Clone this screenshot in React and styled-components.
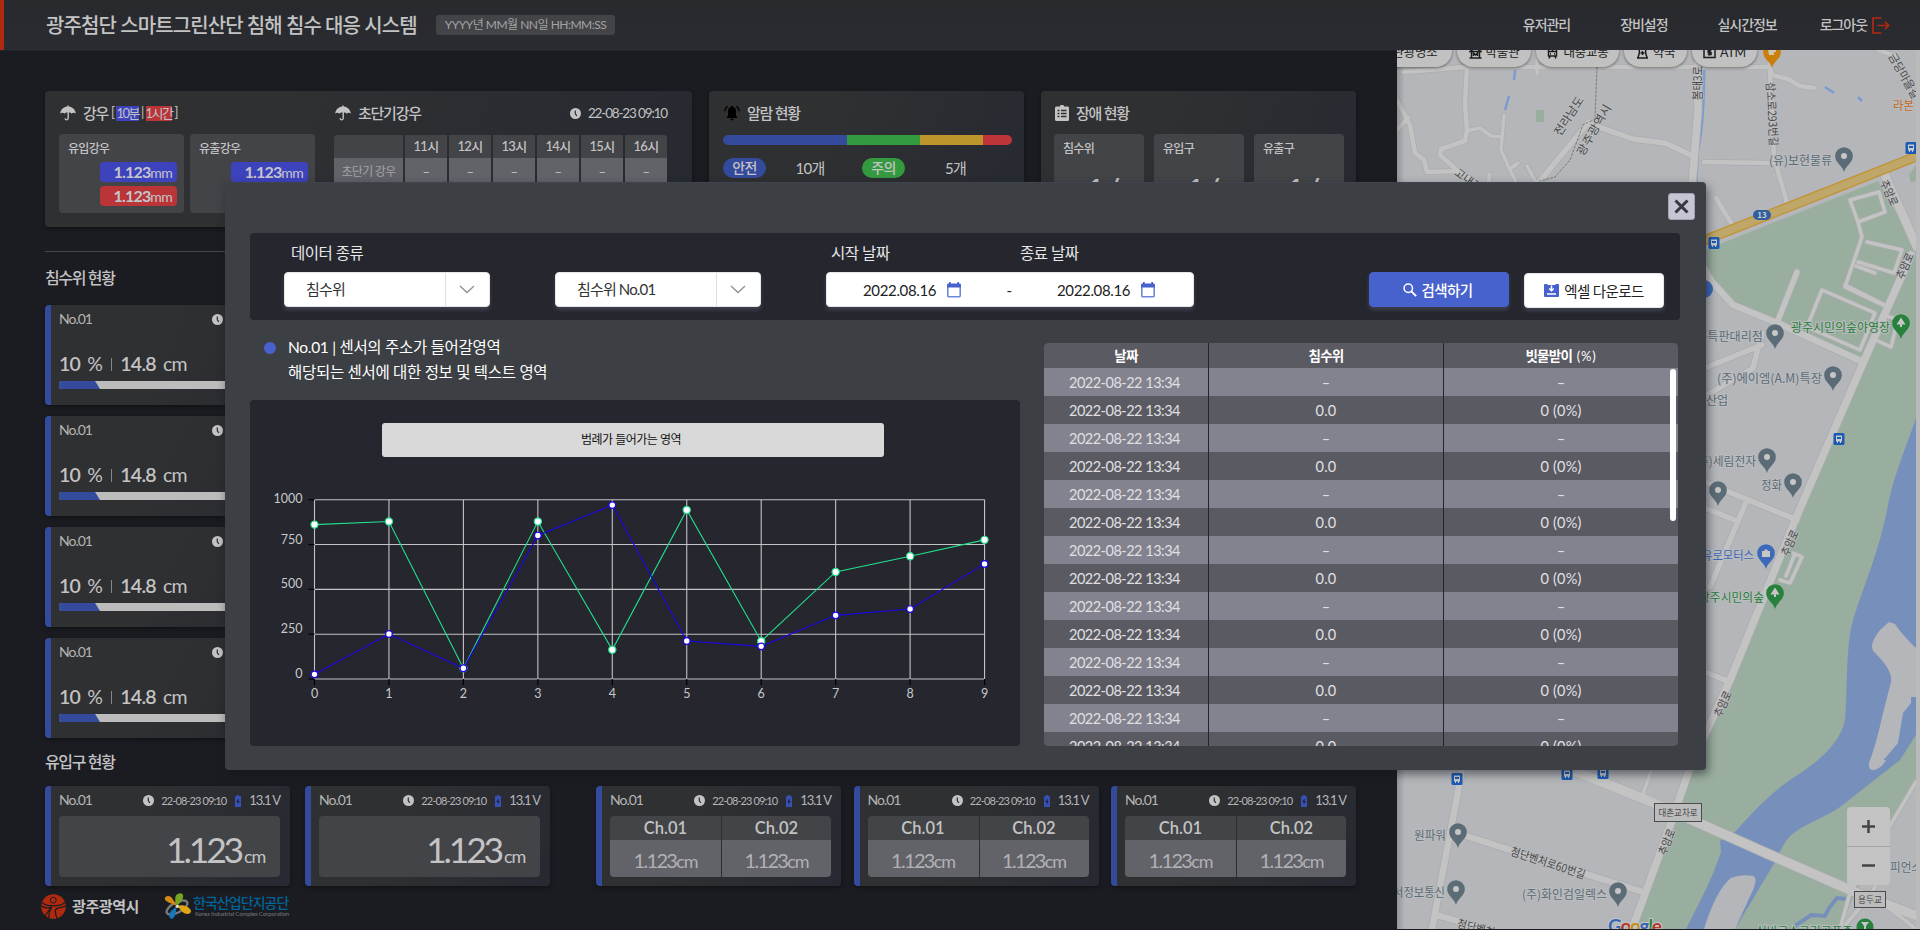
import React from "react";
import styled, { createGlobalStyle, css } from "styled-components";

const GlobalStyle = createGlobalStyle`
  *, *::before, *::after { box-sizing: border-box; }
  html, body { margin: 0; background: #1b1c21; }
  body {
    width: 1920px;
    height: 930px;
    overflow: hidden;
    font-family: Lato, "Noto Sans CJK KR", sans-serif;
    font-size: 14px;
    line-height: 1.2;
    letter-spacing: -0.05em;
    color: #c3c3c4;
    white-space: nowrap;
  }
  svg { display: block; flex: none; }
`;

const Page = styled.div`
  position: relative;
  width: 1920px;
  height: 930px;
  display: flex;
  flex-direction: column;
  background: #1b1c21;
  overflow: hidden;
`;

/* ---------- header ---------- */

const Header = styled.header`
  display: flex;
  align-items: center;
  height: 50px;
  flex: none;
  padding: 0 30px 0 42px;
  border-left: 4px solid #b02a10;
  background: linear-gradient(#27292d, #2b2c31);
  box-shadow: 0 1px 0 #20242d;
`;

const Title = styled.h1`
  width: 390px;
  margin: 0;
  font-size: 20px;
  font-weight: 500;
  letter-spacing: -0.9px;
  color: #c3c3c4;
`;

const TimeChip = styled.div`
  width: 179px;
  height: 20px;
  border-radius: 3px;
  background: #434448;
  color: #a3a3a5;
  font-size: 12px;
  line-height: 20px;
  text-align: center;
  letter-spacing: -0.5px;
`;

const Nav = styled.nav`
  display: flex;
  gap: 50px;
  margin-left: auto;
`;

const NavItem = styled.a`
  display: flex;
  align-items: center;
  gap: 5px;
  font-size: 14px;
  font-weight: 500;
  letter-spacing: -1.05px;
  &:last-child { margin-left: -7px; }
`;

/* ---------- dashboard ---------- */

const Body = styled.div`
  display: flex;
  flex: 1;
  min-height: 0;
`;

const Dashboard = styled.main`
  display: flex;
  flex-direction: column;
  width: 1397px;
  padding: 41px 41px 0 45px;
`;

const panel = css`
  border-radius: 4px;
  background: linear-gradient(115deg, #2f3032 35%, #262931);
  box-shadow: 0 2px 4px rgba(0, 0, 0, 0.35);
`;

const TopRow = styled.section`
  display: grid;
  grid-template-columns: 647px 315px 315px;
  gap: 17px;
  height: 136px;
  border-radius: 4px;
`;

const Card = styled.article`
  ${panel}
  display: flex;
  gap: 19px;
  padding: 12px 14px 0 ${(p) => p.$left || 14}px;
  overflow: hidden;
`;

const Column = styled.div`
  width: ${(p) => p.$w};
  display: flex;
  flex-direction: column;
`;

const CardHead = styled.div`
  display: flex;
  align-items: center;
  gap: 7px;
  height: 20px;
  margin-bottom: 11px;
  font-size: 16px;
  font-weight: 500;
  > svg { margin-left: 1px; }
`;

const HeadText = styled.span`
  font-size: 15px;
  letter-spacing: -1.25px;
`;

const Period = styled.span`
  display: flex;
  align-items: center;
  gap: 2px;
  font-size: 13px;
  font-weight: 400;
  margin-left: -4px;
`;

const Mark = styled.mark`
  display: block;
  height: 15px;
  line-height: 15px;
  letter-spacing: -1.5px;
  color: #c0c0c8;
  background: ${(p) => p.$c};
`;

const Stamp = styled.span`
  display: flex;
  align-items: center;
  gap: 7px;
  margin-left: auto;
  font-size: ${(p) => p.$size || 13.5}px;
  font-weight: 400;
  letter-spacing: ${(p) => p.$ls || "-1.15px"};
`;

const Tiles = styled.div`
  display: flex;
  gap: ${(p) => p.$gap}px;
`;

const Tile = styled.div`
  display: flex;
  flex-direction: column;
  align-items: flex-end;
  gap: 4px;
  width: ${(p) => p.$w}px;
  height: 79px;
  padding: 7px 7px 0 9px;
  border-radius: 4px;
  background: #434448;
`;

const TileLabel = styled.div`
  align-self: flex-start;
  height: 17px;
  font-size: 12px;
  line-height: 15px;
  font-weight: 500;
`;

const TileRatio = styled.div`
  align-self: center;
  margin-top: 10px;
  padding-left: 7px;
  font-size: 27px;
  line-height: 32px;
  font-weight: 700;
  word-spacing: -1px;
`;

const Reading = styled.div`
  width: 77px;
  height: 20px;
  padding-right: 5px;
  border-radius: 4px;
  background: ${(p) => p.$c};
  font-size: 16px;
  line-height: 20px;
  text-align: right;
  color: #c5c5cd;
  b { letter-spacing: -0.8px; }
  small { font-size: 14px; }
`;

const Forecast = styled.div`
  display: grid;
  grid-template-columns: 69px repeat(6, 1fr);
  gap: 0 2px;
  margin-top: 1px;
  border-radius: 3px 3px 0 0;
  overflow: hidden;
`;

const ForecastCell = styled.div`
  height: ${(p) => (p.$head ? 23 : 28)}px;
  line-height: ${(p) => (p.$head ? 23 : 28)}px;
  background: ${(p) => (p.$head ? "#434448" : "#626269")};
  color: ${(p) => (p.$dim ? "#a3a3a7" : "#c3c3c4")};
  font-size: ${(p) => (p.$dim ? 12 : 13)}px;
  font-weight: ${(p) => (p.$head ? 500 : 400)};
  text-align: center;
`;

const AlarmBar = styled.div`
  display: flex;
  height: 10px;
  margin: 1px 0 13px;
  border-radius: 5px;
  overflow: hidden;
`;

const Segment = styled.i`
  width: ${(p) => p.$w}px;
  background: ${(p) => p.$c};
`;

const AlarmCounts = styled.div`
  display: grid;
  grid-template-columns: 43px 88px 51px 101px;
  align-items: center;
  text-align: center;
  font-size: 15px;
  font-weight: 400;
`;

const Pill = styled.span`
  width: 43px;
  height: 20px;
  justify-self: end;
  border-radius: 10px;
  line-height: 20px;
  font-size: 14px;
  font-weight: 500;
  background: ${(p) => p.$c};
`;

const Rule = styled.hr`
  width: 100%;
  height: 1px;
  margin: 24px 0 16px;
  border: 0;
  background: #47484b;
`;

const SectionTitle = styled.h2`
  height: 20px;
  margin: 0 0 ${(p) => p.$gap}px;
  font-size: 16px;
  line-height: 20px;
  font-weight: 500;
  letter-spacing: -1.35px;
`;

const LevelList = styled.section`
  display: flex;
  flex-direction: column;
  gap: 11px;
  margin-bottom: 14px;
`;

const Sensor = styled.article`
  ${panel}
  width: ${(p) => p.$w || 245}px;
  height: 100px;
  padding: 6px 10px 0 8px;
  border-left: 6px solid #344a9c;
`;

const SensorHead = styled.div`
  display: flex;
  align-items: center;
  height: 17px;
  margin-bottom: 7px;
  font-size: 14px;
  font-weight: 400;
  letter-spacing: -1px;
  color: #b5b5b7;
`;

const Volt = styled.span`
  display: flex;
  align-items: center;
  gap: 8px;
  margin-left: 9px;
  font-size: 13px;
  letter-spacing: -1.1px;
`;

const LevelText = styled.div`
  display: flex;
  align-items: center;
  gap: 7px;
  height: 24px;
  margin-top: 24px;
  font-size: 19.5px;
  font-weight: 600;
  letter-spacing: -0.7px;
  span { font-weight: 400; }
  i { width: 1px; height: 13px; margin: 0 1px 0 2px; background: #85868a; }
`;

const Gauge = styled.div`
  display: flex;
  height: 8px;
  margin-top: 5px;
  border-radius: 3px;
  background: #bcbcbc;
  overflow: hidden;
`;

const GaugeFill = styled.div`
  width: 41px;
  background: #344a9c;
  clip-path: polygon(0 0, 88% 0, 100% 100%, 0 100%);
`;

const BottomRow = styled.section`
  display: flex;
  gap: ${(p) => p.$gap || 15}px;
`;

const Groups = styled.div`
  display: flex;
  justify-content: space-between;
`;

const BigValue = styled.div`
  display: flex;
  align-items: baseline;
  justify-content: flex-end;
  height: 61px;
  padding: 12px 15px 0 0;
  border-radius: 4px;
  background: #434448;
  font-size: 35.5px;
  line-height: 44px;
  letter-spacing: -3.2px;
  small { font-size: 18px; letter-spacing: -1.2px; margin-left: 3px; }
`;

const Channels = styled.div`
  display: grid;
  grid-template-columns: 111px 109px;
  column-gap: 1px;
  border-radius: 4px;
  overflow: hidden;
`;

const ChannelName = styled.div`
  height: 24px;
  background: #434448;
  font-size: 16.5px;
  line-height: 25px;
  font-weight: 600;
  text-align: center;
  letter-spacing: 0;
`;

const ChannelValue = styled.div`
  height: 37px;
  background: #626269;
  color: #b1b1b4;
  font-size: 20px;
  line-height: 41px;
  text-align: center;
  letter-spacing: -1.7px;
  small { font-size: 18px; letter-spacing: -1.1px; }
`;

const Logos = styled.footer`
  display: flex;
  align-items: center;
  height: 26px;
  margin: 7px 0 0 -4px;
`;

const CityName = styled.span`
  width: 92px;
  margin-left: 6px;
  font-size: 15px;
  font-weight: 700;
  letter-spacing: -0.4px;
`;

const Corp = styled.div`
  display: flex;
  flex-direction: column;
  margin-left: 2px;
  font-size: 14px;
  line-height: 15px;
  font-weight: 500;
  color: #00649a;
  letter-spacing: -0.95px;
  small {
    font-size: 6px;
    line-height: 8px;
    font-weight: 400;
    letter-spacing: -0.15px;
    color: #77787a;
    margin-left: 2px;
  }
`;

/* ---------- map ---------- */

const MapPane = styled.aside`
  position: relative;
  width: 523px;
  height: 879px;
  background: #bababa;
  overflow: hidden;
`;

const ChipStrip = styled.div`
  position: absolute;
  top: -15px;
  left: -19px;
  display: flex;
  gap: 5px;
`;

const MapChip = styled.div`
  display: flex;
  align-items: center;
  justify-content: center;
  gap: 4px;
  width: ${(p) => p.$w}px;
  height: 32px;
  padding-top: 3px;
  border-radius: 16px;
  background: #c1c1c1;
  box-shadow: 0 1px 3px rgba(0, 0, 0, 0.45);
  font-size: 12.5px;
  letter-spacing: -0.2px;
  color: #222;
`;

const ZoomControl = styled.div`
  position: absolute;
  top: 757px;
  left: 450px;
  width: 43px;
  height: 78px;
  display: grid;
  grid-template-rows: 39px 39px;
  place-items: center;
  border-radius: 4px;
  background: linear-gradient(#c3c3c3 39px, #a4a4a4 39px, #a4a4a4 40px, #c3c3c3 40px);
`;

/* ---------- modal ---------- */

const Modal = styled.div`
  position: absolute;
  top: 182px;
  left: 225px;
  width: 1481px;
  height: 588px;
  display: flex;
  flex-direction: column;
  padding: 10px 26px 24px 25px;
  border-radius: 4px;
  background: #3c3f43;
  border-top: 1px solid #3f444f;
  box-shadow: 2px 4px 10px rgba(20, 22, 30, 0.55);
  color: #fff;
`;

const CloseButton = styled.button`
  display: grid;
  place-items: center;
  width: 27px;
  height: 27px;
  margin: 0 -15px 13px auto;
  flex: none;
  padding: 0;
  border: 1px solid #a4a3b3;
  border-radius: 3px;
  background: #c6c5d3;
`;

const FilterPanel = styled.div`
  display: flex;
  align-items: flex-end;
  height: 87px;
  flex: none;
  padding: 0 16px 13px 34px;
  border-radius: 4px;
  background: #25262e;
`;

const Field = styled.div`
  width: ${(p) => p.$w}px;
  margin-right: ${(p) => p.$mr}px;
`;

const Labels = styled.div`
  display: flex;
  height: 29px;
  padding-left: ${(p) => p.$pl}px;
  font-size: 15.5px;
  line-height: 20px;
  letter-spacing: -0.5px;
  color: #e8e8ea;
  span { width: 189px; flex: none; }
`;

const white = css`
  display: flex;
  align-items: center;
  height: 35px;
  border: 1px solid #e3e6ea;
  border-radius: 4px;
  background: #fff;
  color: #333;
  box-shadow: 0 3px 4px rgba(120, 125, 150, 0.3);
`;

const SelectBox = styled.div`
  ${white}
  padding-left: 21px;
  font-size: 15px;
  letter-spacing: -0.85px;
  svg { margin: 0 auto 0 13px; }
`;

const SelectText = styled.span`
  width: 140px;
  height: 33px;
  line-height: 33px;
  border-right: 1px solid #dcdfe3;
`;

const DateBox = styled.div`
  ${white}
  padding-left: 36px;
  font-size: 15px;
  letter-spacing: -0.35px;
  color: #222;
`;

const DateText = styled.span`
  width: 84px;
`;

const Dash = styled.span`
  width: 96px;
  text-align: center;
`;

const Button = styled.button`
  display: flex;
  align-items: center;
  justify-content: center;
  gap: 5px;
  width: 140px;
  height: 35px;
  margin: 0 0 ${(p) => (p.$primary ? 0 : -1)}px ${(p) => (p.$primary ? "auto" : "15px")};
  padding: 0 ${(p) => (p.$primary ? 3 : 0)}px 0 0;
  border: 1px solid ${(p) => (p.$primary ? "#4762cc" : "#e3e6ea")};
  border-radius: 4px;
  background: ${(p) => (p.$primary ? "#4762cc" : "#fff")};
  color: ${(p) => (p.$primary ? "#fff" : "#222")};
  box-shadow: 0 3px 4px rgba(120, 125, 150, 0.3);
  font: ${(p) => (p.$primary ? 500 : 400)} 14.5px Lato, "Noto Sans CJK KR", sans-serif;
  letter-spacing: -0.6px;
`;

const Content = styled.div`
  display: flex;
  justify-content: space-between;
  flex: 1;
  min-height: 0;
  padding-right: 2px;
`;

const ChartSide = styled.div`
  width: 770px;
  display: flex;
  flex-direction: column;
`;

const Description = styled.div`
  display: flex;
  height: 80px;
  padding: 15px 0 0 14px;
  font-size: 15.5px;
  line-height: 25px;
  letter-spacing: -0.3px;
  &::before {
    content: "";
    width: 12px;
    height: 12px;
    margin: 7px 12px 0 0;
    border-radius: 50%;
    background: #4762cc;
  }
`;

const ChartPanel = styled.div`
  display: flex;
  flex-direction: column;
  height: 346px;
  padding-top: 23px;
  border-radius: 4px;
  background: #25262e;
`;

const Legend = styled.div`
  width: 502px;
  height: 34px;
  margin-left: 132px;
  padding-right: 4px;
  flex: none;
  border-radius: 3px;
  background: #d9d9d9;
  color: #111;
  font-size: 12px;
  line-height: 34px;
  text-align: center;
  letter-spacing: -0.5px;
`;

const DataTable = styled.div`
  position: relative;
  width: 634px;
  height: 403px;
  margin-top: 23px;
  border-radius: 4px;
  overflow: hidden;
`;

const TableRow = styled.div`
  display: grid;
  grid-template-columns: 164px 234px 234px;
  grid-auto-rows: 100%;
  column-gap: 1px;
  height: ${(p) => (p.$head ? 25 : 28)}px;
  line-height: ${(p) => (p.$head ? 26 : 29.5)}px;
  font-size: ${(p) => (p.$head ? 13.5 : 14.5)}px;
  font-weight: ${(p) => (p.$head ? 700 : 400)};
  letter-spacing: ${(p) => (p.$head ? -0.7 : 0.2)}px;
  color: ${(p) => (p.$head ? "#fff" : "#e0e0e3")};
  background: #23242c;
  text-align: center;
  small { font-size: 13px; font-weight: 400; letter-spacing: 0.8px; margin-left: 2px; }
  > div { background: ${(p) => (p.$light ? "#82838e" : "#5a5a62")}; }
`;

const DateCell = styled.div`
  padding-right: 3px;
  letter-spacing: -0.5px;
`;

const ScrollThumb = styled.div`
  position: absolute;
  top: 26px;
  right: 2px;
  width: 6px;
  height: 152px;
  border-radius: 3px;
  background: #fff;
`;

/* ---------- icons ---------- */

const Umbrella = () => (
  <svg width="16" height="16" viewBox="0 0 16 16" fill="#c3c3c4">
    <path d="M7.3 1.6V.4h1.4v1.2C12.600 1.900 15.500 5 15.800 8.700c-.8-1.200-3.300-1.300-4.200.1-.5-.9-1.600-1.300-2.700-1.200v5.500c0 3-4.400 3-4.400.2h1.400c0 1.300 1.600 1.200 1.600-.2V7.600c-1.300-.1-2.500.3-3 1.200-1-1.400-3.500-1.200-4.300-.1C.5 5 3.400 1.900 7.300 1.600z" />
  </svg>
);

const Clock = () => (
  <svg width="11" height="11" viewBox="0 0 10 10">
    <circle cx="5" cy="5" r="5" fill="#c3c3c4" />
    <path d="M4.800 2.200v3.100l1.500 1.800" stroke="#2c2d30" strokeWidth="1.100" fill="none" />
  </svg>
);

const Bell = () => (
  <svg width="16" height="16" viewBox="0 0 16 16">
    <path d="M8 1c.8 0 1.200.4 1.200 1 2 .5 2.800 2.300 2.800 4.200v4.600l1.400 1.500v.7H2.600v-.7L4 10.800V6.200C4 4.300 4.900 2.500 6.800 2c0-.6.4-1 1.200-1zM6.400 13.800h3.200c0 2.100-3.200 2.100-3.200 0z" />
    <path d="M3.600 1.200C1.900 2.400 1 4 .9 6.200M12.400 1.200c1.700 1.200 2.600 2.800 2.700 5" stroke="#000" strokeWidth="1.400" fill="none" />
  </svg>
);

const Clipboard = () => (
  <svg width="14" height="16" viewBox="0 0 14 16">
    <path d="M1.500 1.600H5a2 2 0 0 1 4 0h3.500A1.500 1.500 0 0 1 14 3v11.500a1.500 1.500 0 0 1-1.500 1.500h-11A1.500 1.500 0 0 1 0 14.500V3a1.500 1.500 0 0 1 1.500-1.400z" fill="#c3c3c4" />
    <path d="M2.500 5.500h2M2.500 8.500h2M2.500 11.500h2M6 5.500h5.500M6 8.500h5.500M6 11.500h5.500" stroke="#2e2f32" strokeWidth="1.500" />
  </svg>
);

const Battery = () => (
  <svg width="6" height="12" viewBox="0 0 6 12">
    <path d="M1.800 0h2.400v1.200H6V12H0V1.200h1.800z" fill="#3650b4" />
    <path d="M3.500 3.200L1.400 7h1.300v2.500L4.700 5.900H3.400z" fill="#1a1f38" />
  </svg>
);

const Logout = () => (
  <svg width="18" height="17" viewBox="0 0 18 17" fill="none" stroke="#b02a10" strokeWidth="1.700">
    <path d="M9.500 1H1v15h8.500M5.500 8.500H16.500M13 4.800l3.700 3.700L13 12.200" />
  </svg>
);

const Chevron = () => (
  <svg width="16" height="9" viewBox="0 0 16 9" fill="none" stroke="#8d9095" strokeWidth="1.300">
    <path d="M1 1l7 6.500L15 1" />
  </svg>
);

const Calendar = () => (
  <svg width="14" height="16" viewBox="0 0 14 16">
    <path d="M.8 3v10.800a1 1 0 0 0 1 1h10.400a1 1 0 0 0 1-1V3" fill="none" stroke="#6f86dd" strokeWidth="1.600" />
    <path d="M0 2.800A1.400 1.400 0 0 1 1.400 1.400H2V0h1.700v1.400h6.600V0H12v1.400h.6A1.400 1.400 0 0 1 14 2.800V5.500H0z" fill="#4762cc" />
  </svg>
);

const Search = () => (
  <svg width="14" height="14" viewBox="0 0 14 14" fill="none" stroke="#fff">
    <circle cx="5.300" cy="5.300" r="4.200" strokeWidth="1.500" />
    <path d="M8.400 8.400l4.700 4.700" strokeWidth="2" />
  </svg>
);

const Download = () => (
  <svg width="15" height="13" viewBox="0 0 15 13">
    <rect width="15" height="13" rx="1" fill="#4762cc" />
    <path d="M3.500 0h8v1h-8z" fill="#fff" />
    <path d="M7.500 1.500v5M5.200 4.500l2.300 2.200 2.300-2.200M3 10h9" stroke="#fff" strokeWidth="1.500" fill="none" />
  </svg>
);

const Cross = () => (
  <svg width="15" height="15" viewBox="0 0 15 15" stroke="#37383f" strokeWidth="3">
    <path d="M1.500 1.500l12 12M13.500 1.500l-12 12" />
  </svg>
);

const CityLogo = () => (
  <svg width="25" height="25" viewBox="0 0 25 25">
    <circle cx="12.500" cy="12.500" r="12.300" fill="#b02a10" />
    <g fill="none" stroke="#1b1c21">
      <circle cx="12.300" cy="6.200" r="2.900" strokeWidth="1" />
      <path d="M.8 8.500c5 4.500 17.500 4.500 23.300 0M.2 11.800c3.300 2.500 8.300 2.500 10.500 1.300C8.500 15.800 6 18.500 4.300 21.800M24.800 11.800c-4 2.500-9 1.500-10.300 4.200-.7 2.700.5 5.700 1.800 8.800M10.500 13.500C8 17 7.500 20 8 24" strokeWidth="1.300" />
    </g>
  </svg>
);

const CorpLogo = () => (
  <svg width="27" height="26" viewBox="0 0 27 26">
    <ellipse cx="13" cy="14.500" rx="11.500" ry="5" transform="rotate(-28 13 14.500)" fill="none" stroke="#77797d" strokeWidth="2.300" />
    <path d="M13 13C7 10 1 9 .8 5.500 1 2.500 6 2 8.300 5.500z" fill="#d58a14" />
    <path d="M13 13C10 7 10.500.5 16 .2c5 .2 3 5 1.500 8z" fill="#78a521" />
    <path d="M13 13c6-2 13 1 14 5 0 4-6 3.500-8.500 1z" fill="#e0a513" />
    <path d="M13 13c-1 4-1.500 12-5 12.800C4.500 25.500 4.500 21 7 18z" fill="#1479b8" />
    <circle cx="13.300" cy="13.300" r="1.600" fill="#ddd" />
  </svg>
);

/* ---------- chart ---------- */

const GREEN = [861, 878, 60, 878, 163, 943, 211, 597, 685, 776];
const BLUE = [26, 251, 60, 800, 970, 212, 182, 355, 390, 642];
const px = (i) => 64.500 + i * 74.450;
const py = (v) => 222 - v * 0.1793;

const Series = ({ data, color, r }) => (
  <g stroke={color} strokeWidth="1.100">
    <polyline points={data.map((v, i) => `${px(i)},${py(v)}`).join(" ")} fill="none" />
    {data.map((v, i) => <circle key={i} cx={px(i)} cy={py(v)} r={r} fill="#fff" strokeWidth="1.200" />)}
  </g>
);

const Chart = () => (
  <svg width="770" height="289" viewBox="0 0 770 289" fontSize="12.500" fill="#c8c8cb" letterSpacing="0">
    <g stroke="#c4c4c6" strokeWidth="1.100">
      {[0, 250, 500, 750, 1000].map((v) => <path key={v} d={`M64.500 ${py(v)}H734.600`} />)}
      {GREEN.map((_, i) => <path key={i} d={`M${px(i)} 42.700V222`} />)}
    </g>
    <g stroke="#000" strokeWidth="1.200">
      {[0, 250, 500, 750, 1000].map((v) => <path key={v} d={`M58.500 ${py(v)}h6`} />)}
      {GREEN.map((_, i) => <path key={i} d={`M${px(i)} 222v6`} />)}
    </g>
    {[[1000, 46], [750, 86.500], [500, 131], [250, 176], [0, 220.500]].map(([v, y]) => (
      <text key={v} x="52.500" y={y} textAnchor="end">{v}</text>
    ))}
    {GREEN.map((_, i) => <text key={i} x={px(i)} y="241" textAnchor="middle">{i}</text>)}
    <Series data={GREEN} color="#23e08d" r={3.600} />
    <Series data={BLUE} color="#1a06e6" r={3.300} />
  </svg>
);

/* ---------- map drawing ---------- */

const ROADS = [
  [5, "M1403 72L1466 67H1770L1772 75 1788 79 1800 86 1814 88"],
  [5, "M1467 67L1465 103 1467 131 1465 141 1441 149 1440 155 1458 171 1490 192M1458 171L1427 172 1424 160 1415 153 1410 125 1397 100M1397 130L1408 118"],
  [4, "M1467 131L1480 128 1491 136 1502 137M1504 115L1501 150 1510 170 1518 186M1510 169L1518 163M1527 166L1538 186M1489 174V190M1537 50V74"],
  [6, "M1539 182L1589 122 1596 126 1633 139 1665 143 1691 155"],
  [8, "M1698 50V110L1692 186"],
  [5, "M1769 50L1774 157 1787 203M1704 162L1772 163M1716 198L1733 226M1878 50L1895 56"],
  [9, "M1884 173L1917 247"],
  [8, "M1911 255L1863 363 1795 520 1730 680 1690 767 1671 823 1632 929"],
  [7, "M1700 262L1712 282 1733 305 1777 323 1863 362"],
  [4, "M1850 200L1879 192 1885 212 1858 222ZM1858 222L1862 237 1845 287 1889 308M1867 242L1902 250 1894 273 1858 262M1856 266L1875 273"],
  [4, "M1822 290L1875 313 1860 350 1807 327ZM1845 285L1889 307M1885 316L1898 319 1891 347 1878 341M1793 553L1802 557 1790 583 1780 580M1794 556L1786 576"],
  [6, "M1797 272L1777 323M1707 367L1762 345M1762 333L1753 368 1707 395"],
  [6, "M1700 480L1797 520M1700 506L1737 521M1747 500L1710 587M1700 670L1730 682"],
  [10, "M1560 765L1654 803 1775 857 1857 893 1920 917"],
  [7, "M1463 765L1432 929M1463 835L1643 892M1437 915L1491 931"],
  [4, "M1652 768L1643 794M1916 782L1850 893 1840 929M1876 884L1871 895 1845 925M1885 905L1916 929"],
];

const GRAY = "#5b6c77";
const PINS = [
  [1844, 156, GRAY], [1775, 333, GRAY], [1833, 375, GRAY], [1767, 457, GRAY], [1793, 482, GRAY], [1718, 490, GRAY],
  [1766, 553, "#3d69b8"], [1901, 323, "#27803c"], [1775, 593, "#27803c"],
  [1458, 832, GRAY], [1456, 889, GRAY], [1618, 891, GRAY], [1772, 52, "#c97f0c"],
];
const STOPS = [[1911, 148], [1714, 243], [1839, 439], [1457, 779], [1567, 774], [1603, 773]];

/* x, centre y, text, anchor, width, colour */
const PLACES = [
  [1832, 160, "(유)보현물류", "end", 63, GRAY],
  [1763, 336, "광주특판대리점", "end", 78, GRAY],
  [1822, 378, "(주)에이엠(A.M)특장", "end", 105, GRAY],
  [1728, 400, "산업", "end", 22, GRAY],
  [1756, 461, "(주)세림전자", "end", 62, GRAY],
  [1782, 485, "정화", "end", 21, GRAY],
  [1754, 555, "유로모터스", "end", 52, "#3d69b8"],
  [1764, 597, "광주시민의숲", "end", 65, "#27803c"],
  [1890, 327, "광주시민의숲야영장", "end", 99, "#27803c"],
  [1446, 835, "원파워", "end", 32, GRAY],
  [1445, 892, "서정보통신", "end", 52, GRAY],
  [1607, 894, "(주)화인검일렉스", "end", 85, GRAY],
  [1853, 931, "심바로스그린골프존", "end", 97, "#27803c"],
  [1890, 867, "피언스", "start", 32, GRAY],
  [1893, 105, "라본", "start", 21, "#c06a20"],
];

/* centre x, centre y, rotation, text, width */
const STREETS = [
  [1569, 116, -57, "전라남도", 44], [1594, 130, -60, "광주광역시", 57], [1698, 83, -90, "봄태3로", 34],
  [1772, 114, 87, "삼소로293번길", 64], [1889, 193, 66, "추암로", 27], [1905, 266, -66, "추암로", 27],
  [1790, 543, -66, "추암로", 27], [1723, 704, -66, "추암로", 27], [1667, 842, -68, "추암로", 27],
  [1548, 863, 18, "첨단벤처로60번길", 78], [1476, 928, 15, "첨단벤처", 38], [1904, 76, 60, "금당마을길", 50],
  [1468, 180, 37, "고내길", 30],
];

const BOXES = [[1654, 803, 48, 19, "대촌교차로", 39], [1854, 891, 32, 17, "용두교", 24]];

const MapDrawing = () => (
  <svg width="519" height="879" viewBox="1397 50 519 879" fontFamily='"Noto Sans CJK KR", sans-serif' letterSpacing="0">
    <rect x="1397" y="50" width="519" height="879" fill="#b4b6b9" />
    <g fill="#9aae9f">
      <path d="M1700 252L1878 181 1916 247 1863 362 1777 323 1733 305 1700 262ZM1916 250L1863 363 1690 767 1632 929H1916ZM1536 110h8v12h-8zM1916 165l-7 10 2 8 5-2z" />
    </g>
    <path d="M1916 780L1855 893 1840 929H1916Z" fill="#b4b6b9" />
    <path d="M1916 418C1905 450 1892 480 1887 510C1878 555 1862 590 1853 620C1845 650 1848 690 1845 720C1840 745 1815 764 1793 778C1770 793 1750 815 1735 832L1720 841 1721 852C1712 880 1698 905 1686 929H1735L1775 862C1780 850 1785 842 1790 836C1805 823 1825 818 1840 807L1900 760 1916 735Z" fill="#7690bb" />
    <path d="M1889 622L1880 630Q1868 645 1874 652 1893 670 1891 682L1883 713Q1876 745 1869 763 1868 771 1875 770L1898 743 1903 713 1911 703 1911 697H1916V648Q1903 636 1895 624ZM1704 929Q1716 890 1731 878 1740 874 1753 876 1758 878 1753 890L1735 929ZM1880 760l-10 2q-3 8 4 8 8-2 12-10z" fill="#b4b6b9" />
    <path d="M1847 899l-10-1-8 10-4 8-14-1-16 11" fill="none" stroke="#7690bb" strokeWidth="4" />
    <path d="M1704 50Q1705 120 1698 150L1696 186M1516 60l-2 20M1509 96l-4 14M1825 87l9 6M1858 97l4 4" fill="none" stroke="#7c9bd0" strokeWidth="2.500" />
    <g fill="none" strokeLinejoin="round" strokeLinecap="round">
      {ROADS.map(([w, d]) => <path key={d} d={d} stroke="#aaacaf" strokeWidth={w + 1} />)}
      {ROADS.map(([w, d]) => <path key={d} d={d} stroke="#c3c3c3" strokeWidth={w - 0.500} />)}
      <path d="M1690 246L1920 155" stroke="#c2922f" strokeWidth="10" />
      <path d="M1690 246L1920 155" stroke="#bfa769" strokeWidth="7.500" />
      <path d="M1597 67L1595 119 1583 125 1570 160 1555 177 1540 181" stroke="#77787a" strokeDasharray="2 2" />
    </g>
    <rect x="1753" y="210" width="18" height="10" rx="5" fill="#2f5f9f" />
    <text x="1762" y="218" fontSize="8" fontWeight="700" fill="#ccc" textAnchor="middle">13</text>
    <circle cx="1704" cy="289" r="9" fill="#3d69b8" />
    {STOPS.map(([x, y]) => (
      <g key={x} transform={`translate(${x} ${y})`}>
        <rect x="-5.500" y="-6" width="11" height="12" rx="1.500" fill="#1c5bb5" />
        <path d="M-3-3.500h6v6H2v1.500H1V2.500H-1V4H-2V2.500H-3z" fill="#ccc" />
        <path d="M-2-2h4v2h-4z" fill="#1c5bb5" />
      </g>
    ))}
    {PINS.map(([x, y, c]) => (
      <g key={`${x}-${y}`} transform={`translate(${x} ${y})`}>
        <path d="M0 16C-2 9-8.800 7-8.800 0A8.800 8.800 0 0 1 8.800 0C8.800 7 2 9 0 16z" fill={c} />
        {c === GRAY ? <circle r="3" fill="#c6c6c6" /> : null}
        {c === "#27803c" ? <path d="M0-5.500l4.500 7H1V4H-1V1.500h-3.500z" fill="#c6c6c6" /> : null}
        {c === "#3d69b8" ? <path d="M-4-2h2.200a1.800 1.800 0 0 1 3.600 0H4v6h-8z" fill="#c6c6c6" /> : null}
        {c === "#c97f0c" ? <path d="M-4-3h8v3h-2v3h-5z" fill="#d3c6b0" /> : null}
      </g>
    ))}
    <circle cx="1865" cy="927" r="8.500" fill="#27803c" />
    <path d="M1861 922h8l-3 4h-2zM1864 925h2v4h-2z" fill="#c6c6c6" />
    <g fontSize="12.500" stroke="#bcbdbf" strokeWidth="2" paintOrder="stroke">
      {PLACES.map(([x, y, t, a, w, c]) => (
        <text key={t} x={x} y={y + 4.500} textAnchor={a} textLength={w} lengthAdjust="spacingAndGlyphs" fill={c}>{t}</text>
      ))}
    </g>
    <g fontSize="11.500" fill="#48494b" stroke="#bcbdbf" strokeWidth="1.500" paintOrder="stroke" textAnchor="middle">
      {STREETS.map(([x, y, r, t, w]) => (
        <text key={`${x}${t}`} transform={`translate(${x} ${y}) rotate(${r})`} y="4" textLength={w} lengthAdjust="spacingAndGlyphs">{t}</text>
      ))}
    </g>
    {BOXES.map(([x, y, w, h, t, l]) => (
      <g key={t}>
        <rect x={x + 0.500} y={y + 0.500} width={w - 1} height={h - 1} fill="#bcbcbc" stroke="#4a4b4d" />
        <text x={x + w / 2} y={y + h / 2 + 3.500} fontSize="9" textAnchor="middle" textLength={l} lengthAdjust="spacingAndGlyphs" fill="#48494b">{t}</text>
      </g>
    ))}
    <text x="1608" y="933" fontFamily="Lato, sans-serif" fontSize="19" fontWeight="700" textLength="54" stroke="#c6c6c6" strokeWidth="2" paintOrder="stroke">
      <tspan fill="#3566b5">G</tspan><tspan fill="#b5372c">o</tspan><tspan fill="#c1910c">o</tspan>
      <tspan fill="#3566b5">g</tspan><tspan fill="#2b8543">l</tspan><tspan fill="#b5372c">e</tspan>
    </text>
    <linearGradient id="edge"><stop stopColor="#000" stopOpacity=".18" /><stop offset="1" stopOpacity="0" /></linearGradient>
    <rect x="1397" y="50" width="8" height="879" fill="url(#edge)" />
  </svg>
);

const ChipIcon = ({ d }) => (
  <svg width="13" height="13" viewBox="0 0 13 13" fill="none" stroke="#1c1c1c" strokeWidth="1.500"><path d={d} /></svg>
);

/* ---------- composed parts ---------- */

const SensorHeader = () => (
  <SensorHead>
    <span>No.01</span>
    <Stamp $size={11} $ls="-0.900px"><Clock />22-08-23 09:10</Stamp>
    <Volt><Battery />13.1 V</Volt>
  </SensorHead>
);

const LevelCard = () => (
  <Sensor $w={314}>
    <SensorHeader />
    <LevelText>10 <span>%</span><i />14.8 <span>cm</span></LevelText>
    <Gauge><GaugeFill /></Gauge>
  </Sensor>
);

const InletCard = () => (
  <Sensor>
    <SensorHeader />
    <BigValue>1.123<small>cm</small></BigValue>
  </Sensor>
);

const ChannelCard = () => (
  <Sensor>
    <SensorHeader />
    <Channels>
      <ChannelName>Ch.01</ChannelName>
      <ChannelName>Ch.02</ChannelName>
      <ChannelValue>1.123<small>cm</small></ChannelValue>
      <ChannelValue>1.123<small>cm</small></ChannelValue>
    </Channels>
  </Sensor>
);

const RainTile = ({ label }) => (
  <Tile $w={125}>
    <TileLabel>{label}</TileLabel>
    <Reading $c="#3d42bd"><b>1.123</b><small>mm</small></Reading>
    <Reading $c="#b93538"><b>1.123</b><small>mm</small></Reading>
  </Tile>
);

const HOURS = ["11시", "12시", "13시", "14시", "15시", "16시"];

export default function App() {
  return (
    <Page>
      <GlobalStyle />
      <Header>
        <Title>광주첨단 스마트그린산단 침해 침수 대응 시스템</Title>
        <TimeChip>YYYY년 MM월 NN일 HH:MM:SS</TimeChip>
        <Nav>
          <NavItem>유저관리</NavItem>
          <NavItem>장비설정</NavItem>
          <NavItem>실시간정보</NavItem>
          <NavItem>로그아웃<Logout /></NavItem>
        </Nav>
      </Header>

      <Body>
        <Dashboard>
          <TopRow>
            <Card>
              <Column $w="256px">
                <CardHead>
                  <Umbrella />
                  <HeadText>강우</HeadText>
                  <Period>[<Mark $c="#3d42bd">10분</Mark>|<Mark $c="#b93538">1시간</Mark>]</Period>
                </CardHead>
                <Tiles $gap={6}>
                  <RainTile label="유입강우" />
                  <RainTile label="유출강우" />
                </Tiles>
              </Column>
              <Column $w="333px">
                <CardHead>
                  <Umbrella />
                  <HeadText>초단기강우</HeadText>
                  <Stamp><Clock />22-08-23 09:10</Stamp>
                </CardHead>
                <Forecast>
                  <ForecastCell $head />
                  {HOURS.map((h) => <ForecastCell $head key={h}>{h}</ForecastCell>)}
                  <ForecastCell $dim>초단기 강우</ForecastCell>
                  {HOURS.map((h) => <ForecastCell key={h}>–</ForecastCell>)}
                </Forecast>
              </Column>
            </Card>

            <Card>
              <Column $w="289px">
                <CardHead><Bell /><HeadText>알람 현황</HeadText></CardHead>
                <AlarmBar>
                  <Segment $w={124} $c="#344a9c" />
                  <Segment $w={73} $c="#349a40" />
                  <Segment $w={63} $c="#bc952c" />
                  <Segment $w={29} $c="#bd3538" />
                </AlarmBar>
                <AlarmCounts>
                  <Pill $c="#344a9c">안전</Pill><span>10개</span>
                  <Pill $c="#349a40">주의</Pill><span>5개</span>
                </AlarmCounts>
              </Column>
            </Card>

            <Card $left={13}>
              <Column $w="290px">
                <CardHead><Clipboard /><HeadText>장애 현황</HeadText></CardHead>
                <Tiles $gap={10}>
                  {["침수위", "유입구", "유출구"].map((t) => (
                    <Tile $w={90} key={t}>
                      <TileLabel>{t}</TileLabel>
                      <TileRatio>1 /</TileRatio>
                    </Tile>
                  ))}
                </Tiles>
              </Column>
            </Card>
          </TopRow>

          <Rule />
          <SectionTitle $gap={17}>침수위 현황</SectionTitle>
          <LevelList>
            {[1, 2, 3, 4].map((n) => <LevelCard key={n} />)}
          </LevelList>
          <SectionTitle $gap={14}>유입구 현황</SectionTitle>
          <Groups>
            <BottomRow><InletCard /><InletCard /></BottomRow>
            <BottomRow $gap={12.500}><ChannelCard /><ChannelCard /><ChannelCard /></BottomRow>
          </Groups>
          <Logos>
            <CityLogo />
            <CityName>광주광역시</CityName>
            <CorpLogo />
            <Corp>한국산업단지공단<small>Korea Industrial Complex Corporation</small></Corp>
          </Logos>
        </Dashboard>

        <MapPane>
          <MapDrawing />
          <ChipStrip>
            <MapChip $w={74}>관광명소</MapChip>
            <MapChip $w={74}><ChipIcon d="M1 5.500L6.500 1.500 12 5.500zM2.500 5.500v6M10.500 5.500v6M.5 12h12M4.500 10V7l2 2 2-2v3" />박물관</MapChip>
            <MapChip $w={83}><ChipIcon d="M2.500 1.500h8v8.500h-8zM2 5.500h9M6.500 1.500v4M3 12.500l1-2M10 12.500l-1-2M4 8h1M8 8h1" />대중교통</MapChip>
            <MapChip $w={63}><ChipIcon d="M1 1.500h11M1 12h11M2 2c3 3 1 6 0 9.500M11 2c-3 3-1 6 0 9.500M6.500 5v4M4.500 7h4" />약국</MapChip>
            <MapChip $w={65}><ChipIcon d="M1 1.500h11v10H1zM8.300 4.500H5.200v2h2.800v2H4.800M6.500 3.500v6" />ATM</MapChip>
          </ChipStrip>
          <ZoomControl>
            <svg width="13" height="13"><path d="M6.500 0v13M0 6.500h13" stroke="#444" strokeWidth="2.500" /></svg>
            <svg width="13" height="3"><path d="M0 1.500h13" stroke="#444" strokeWidth="2.500" /></svg>
          </ZoomControl>
        </MapPane>
      </Body>

      <Modal>
        <CloseButton aria-label="닫기"><Cross /></CloseButton>
        <FilterPanel>
          <Field $w={206} $mr={65}>
            <Labels $pl={7}>데이터 종류</Labels>
            <SelectBox><SelectText>침수위</SelectText><Chevron /></SelectBox>
          </Field>
          <Field $w={206} $mr={65}>
            <SelectBox><SelectText>침수위 No.01</SelectText><Chevron /></SelectBox>
          </Field>
          <Field $w={368} $mr={0}>
            <Labels $pl={5}><span>시작 날짜</span><span>종료 날짜</span></Labels>
            <DateBox>
              <DateText>2022.08.16</DateText><Calendar />
              <Dash>-</Dash>
              <DateText>2022.08.16</DateText><Calendar />
            </DateBox>
          </Field>
          <Button $primary><Search />검색하기</Button>
          <Button><Download />엑셀 다운로드</Button>
        </FilterPanel>

        <Content>
          <ChartSide>
            <Description>
              <div>No.01 | 센서의 주소가 들어갈영역<br />해당되는 센서에 대한 정보 및 텍스트 영역</div>
            </Description>
            <ChartPanel>
              <Legend>범례가 들어가는 영역</Legend>
              <Chart />
            </ChartPanel>
          </ChartSide>
          <DataTable>
            <TableRow $head>
              <div>날짜</div><div>침수위</div><div>빗물받이 <small>(%)</small></div>
            </TableRow>
            {Array.from({ length: 14 }, (_, i) => (
              <TableRow key={i} $light={i % 2 === 0}>
                <DateCell>2022-08-22 13:34</DateCell>
                <div>{i % 2 ? "0.0" : "–"}</div>
                <div>{i % 2 ? "0 (0%)" : "–"}</div>
              </TableRow>
            ))}
            <ScrollThumb />
          </DataTable>
        </Content>
      </Modal>
    </Page>
  );
}
